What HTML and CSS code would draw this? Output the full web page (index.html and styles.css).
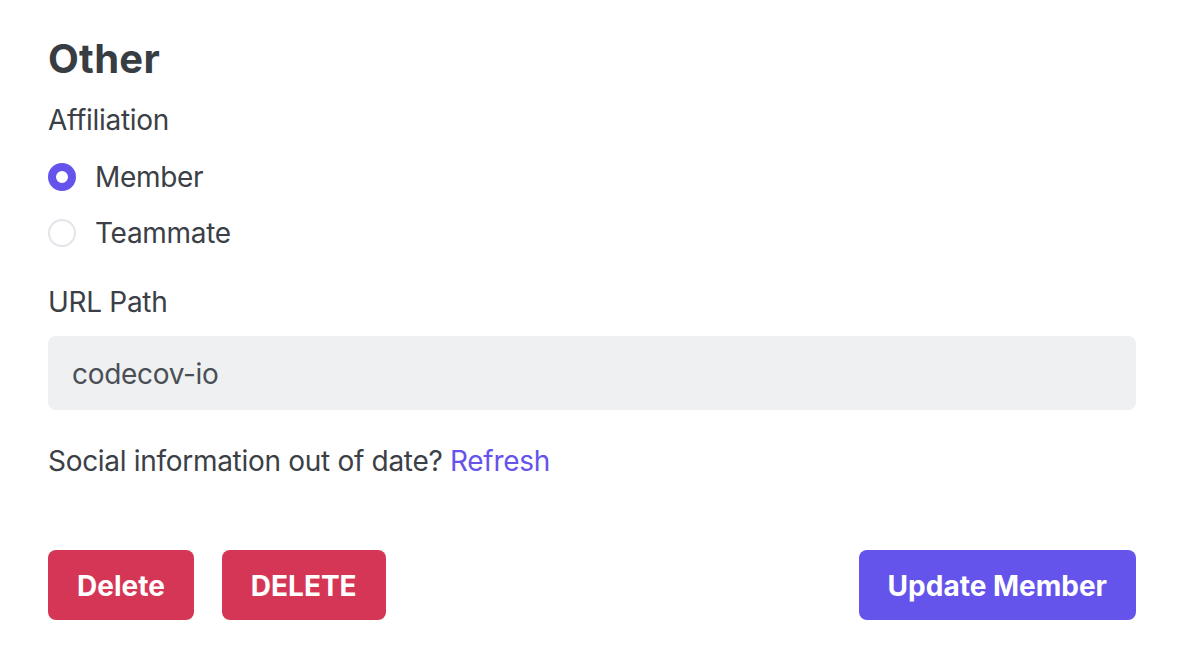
FILE: index.html
```html
<!DOCTYPE html>
<html lang="en">
<head>
<meta charset="utf-8">
<title>Other</title>
<link rel="stylesheet" href="styles.css">
</head>
<body>
<form class="panel">
  <h2 class="title">Other</h2>
  <div class="label">Affiliation</div>
  <div class="radios">
    <label class="radio-row"><span class="radio checked"></span><span>Member</span></label>
    <label class="radio-row"><span class="radio"></span><span>Teammate</span></label>
  </div>
  <div class="label url-label">URL Path</div>
  <div class="input">codecov-io</div>
  <p class="social">Social information out of date? <a class="link" href="#">Refresh</a></p>
  <div class="actions">
    <div class="left-actions">
      <button type="button" class="btn btn-danger">Delete</button>
      <button type="button" class="btn btn-danger">DELETE</button>
    </div>
    <button type="button" class="btn btn-primary">Update Member</button>
  </div>
</form>
</body>
</html>
```
FILE: styles.css
```css
* { box-sizing: border-box; }
html, body { margin: 0; padding: 0; background: #ffffff; }
body {
  font-family: Inter, "Noto Sans", sans-serif;
  color: #3b4046;
  font-size: 28px;
  line-height: 40px;
  letter-spacing: -0.3px;
}
.panel {
  width: 1088px;
  margin-left: 48px;
  padding-top: 35px;
}
.title {
  margin: 0;
  font-size: 40px;
  line-height: 48px;
  font-weight: 700;
  color: #383d43;
  letter-spacing: 0.3px;
}
.label {
  margin-top: 17px;
}
.radios {
  margin-top: 17px;
  display: flex;
  flex-direction: column;
  gap: 16px;
}
.radio-row {
  display: flex;
  align-items: center;
  gap: 19px;
  height: 40px;
}
.radio {
  width: 28px;
  height: 28px;
  border-radius: 50%;
  border: 2px solid #e2e5ea;
  background: #fff;
  flex: none;
}
.radio.checked {
  border: 8px solid #6553ec;
  background: #fff;
}
.url-label {
  margin-top: 29px;
}
.input {
  margin-top: 14px;
  height: 74px;
  border-radius: 8px;
  background: #eff0f2;
  padding: 2px 0 0 24px;
  display: flex;
  align-items: center;
  color: #4a4f55;
}
.social {
  margin: 31px 0 0;
}
.link {
  color: #6553ec;
  text-decoration: none;
}
.actions {
  margin-top: 69px;
  display: flex;
  justify-content: space-between;
}
.left-actions {
  display: flex;
  gap: 28px;
}
.btn {
  height: 70px;
  border: none;
  border-radius: 8px;
  padding: 2px 29px 0;
  font-family: Inter, "Noto Sans", sans-serif;
  font-size: 28px;
  font-weight: 700;
  letter-spacing: 0;
  color: #ffffff;
  cursor: pointer;
}
.btn-danger { background: #d53655; }
.btn-primary { background: #6554ec; }
```
